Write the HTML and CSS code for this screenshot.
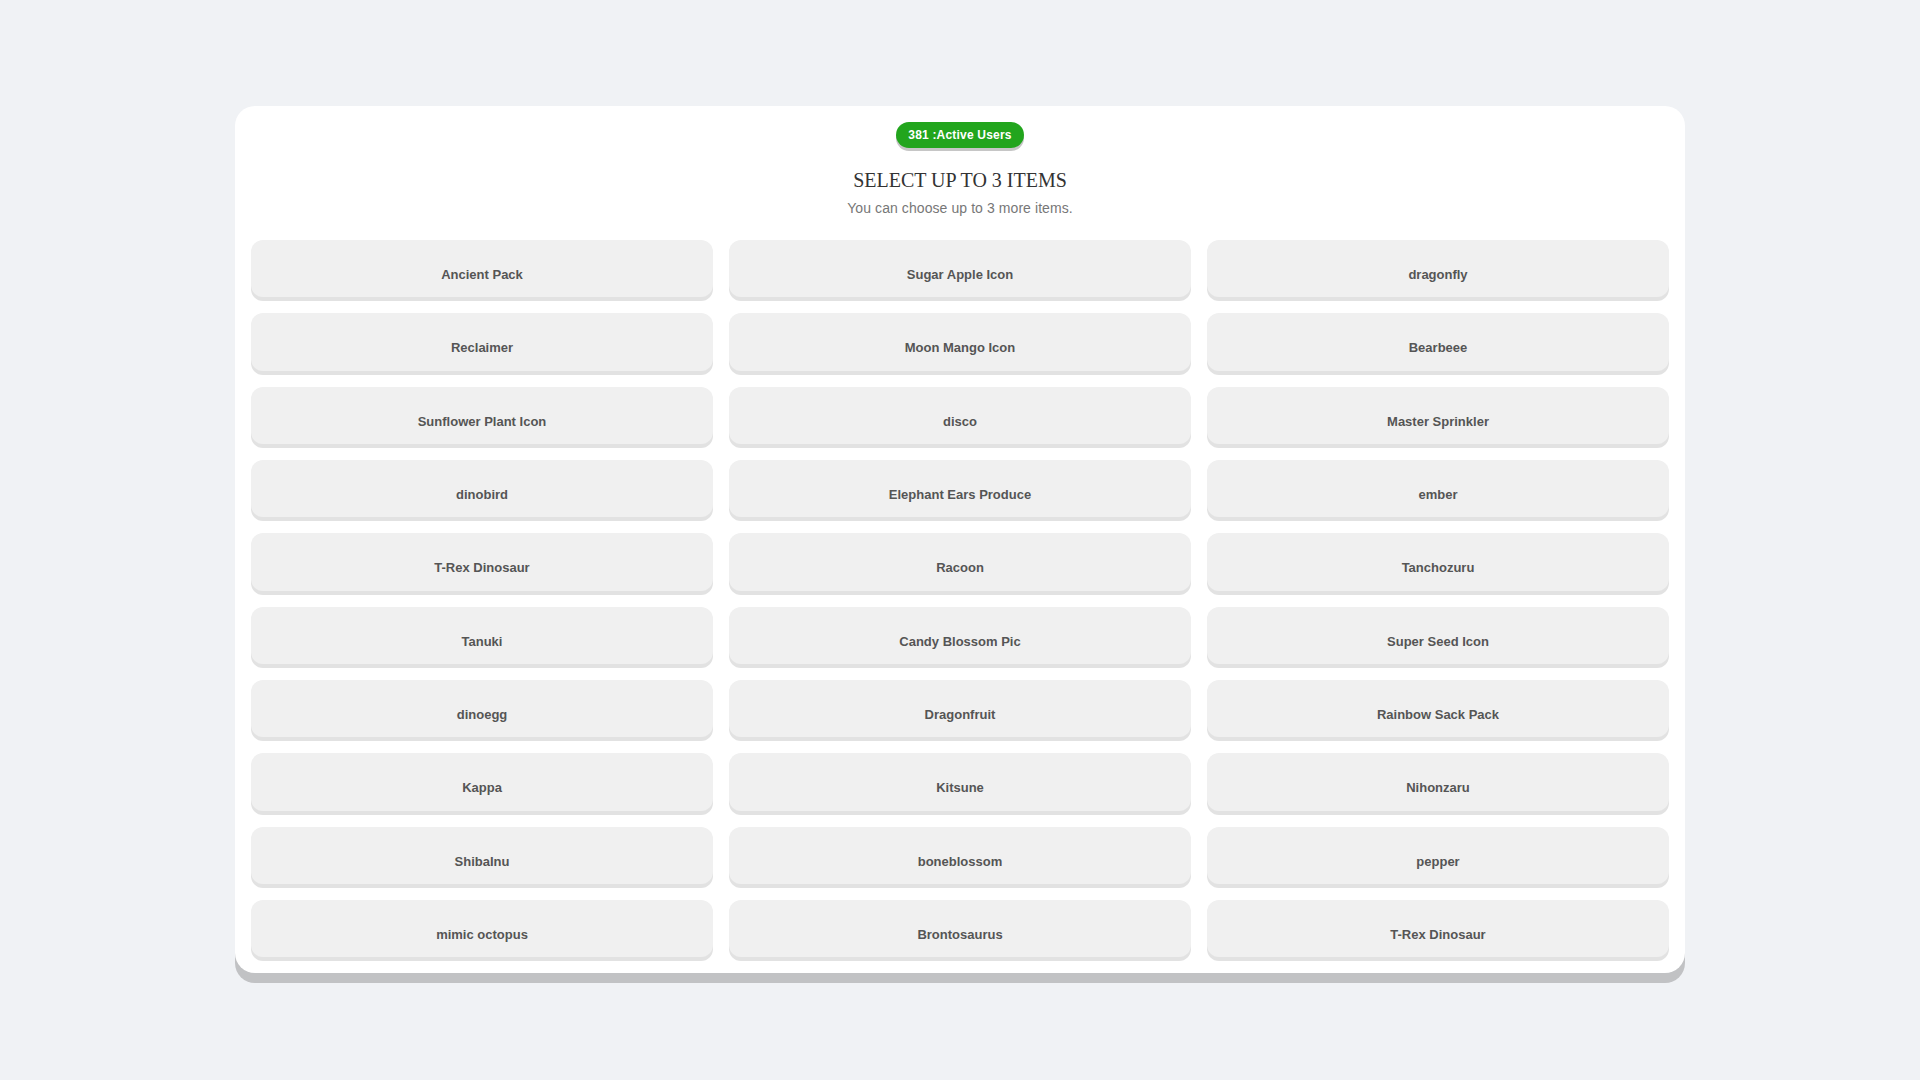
FILE: index.html
```html
<!DOCTYPE html>
<html lang="en">
<head>
<meta charset="utf-8">
<title>Select Items</title>
<link rel="stylesheet" href="styles.css">
</head>
<body>
<main class="card">
  <header class="head">
    <span class="badge">381 :Active Users</span>
    <h1 class="title">SELECT UP TO 3 ITEMS</h1>
    <p class="subtitle">You can choose up to 3 more items.</p>
  </header>
  <div class="grid">
    <div class="item">Ancient Pack</div>
    <div class="item">Sugar Apple Icon</div>
    <div class="item">dragonfly</div>
    <div class="item">Reclaimer</div>
    <div class="item">Moon Mango Icon</div>
    <div class="item">Bearbeee</div>
    <div class="item">Sunflower Plant Icon</div>
    <div class="item">disco</div>
    <div class="item">Master Sprinkler</div>
    <div class="item">dinobird</div>
    <div class="item">Elephant Ears Produce</div>
    <div class="item">ember</div>
    <div class="item">T-Rex Dinosaur</div>
    <div class="item">Racoon</div>
    <div class="item">Tanchozuru</div>
    <div class="item">Tanuki</div>
    <div class="item">Candy Blossom Pic</div>
    <div class="item">Super Seed Icon</div>
    <div class="item">dinoegg</div>
    <div class="item">Dragonfruit</div>
    <div class="item">Rainbow Sack Pack</div>
    <div class="item">Kappa</div>
    <div class="item">Kitsune</div>
    <div class="item">Nihonzaru</div>
    <div class="item">ShibaInu</div>
    <div class="item">boneblossom</div>
    <div class="item">pepper</div>
    <div class="item">mimic octopus</div>
    <div class="item">Brontosaurus</div>
    <div class="item">T-Rex Dinosaur</div>
  </div>
</main>
</body>
</html>
```
FILE: styles.css
```css
html, body {
  margin: 0;
  padding: 0;
  background: #f0f2f5;
}
body {
  font-family: "Liberation Sans", Arial, sans-serif;
  padding-top: 106px;
  padding-bottom: 40px;
}
.card {
  width: 1450px;
  box-sizing: border-box;
  margin: 0 auto;
  background: #ffffff;
  border-radius: 20px;
  padding: 16px;
  box-shadow: 0 10px 0 #c1c2c4;
}
.head {
  display: flex;
  flex-direction: column;
  align-items: center;
}
.badge {
  display: inline-block;
  background: #22a51d;
  color: #ffffff;
  font-size: 12px;
  font-weight: bold;
  line-height: 16px;
  padding: 5px 12px;
  border-radius: 14px;
  box-shadow: 0 3px 0 #c6c6c6;
  letter-spacing: 0.2px;
}
.title {
  margin: 21px 0 0;
  font-family: "Liberation Serif", "Times New Roman", serif;
  font-weight: normal;
  font-size: 20px;
  line-height: 23px;
  color: #333333;
}
.subtitle {
  margin: 8px 0 0;
  font-size: 14px;
  line-height: 16px;
  letter-spacing: 0.08px;
  color: #777777;
}
.grid {
  margin-top: 24px;
  display: grid;
  grid-template-columns: repeat(3, 1fr);
  column-gap: 16px;
  row-gap: 16px;
}
.item {
  height: 57.33px;
  box-sizing: border-box;
  padding: 27px 10px 0;
  border-radius: 12px;
  background: #f0f0f0;
  box-shadow: 0 4px 0 #e2e2e2;
  font-size: 13px;
  font-weight: bold;
  line-height: 15px;
  color: #555555;
  text-align: center;
  cursor: pointer;
}
```
